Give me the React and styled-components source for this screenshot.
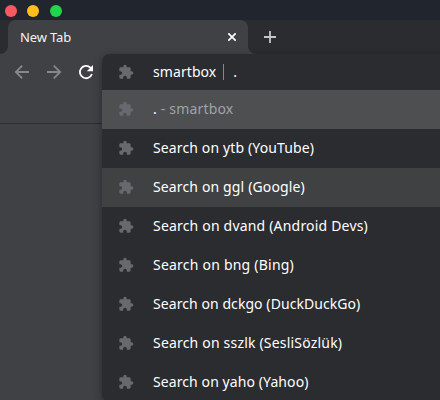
import React from "react";
import styled, { createGlobalStyle } from "styled-components";

const Global = createGlobalStyle`
  * { box-sizing: border-box; }
  html, body { margin: 0; overflow: hidden; background: #404145; }
  body { font-family: "Noto Sans", sans-serif; }
  svg { display: block; flex: none; }
`;

const Window = styled.div`
  position: relative;
  width: 440px;
  height: 400px;
  overflow: hidden;
  background: #404145;
  color: #fff;
`;

const TitleBar = styled.header`
  display: flex;
  gap: 10px;
  height: 20px;
  padding: 5px 0 0 5px;
  background: #21262e;
`;

const WindowButton = styled.span`
  width: 12px;
  height: 12px;
  margin-right: ${({ $gap }) => $gap || 0}px;
  border-radius: 50%;
  background: ${({ $color }) => $color};
`;

const TabStrip = styled.div`
  display: flex;
  height: 34px;
  background: #2b2c30;
`;

const Flare = styled.span`
  align-self: flex-end;
  width: 8px;
  height: 8px;
  background: radial-gradient(
    circle at ${({ $side }) => ($side === "left" ? "0 0" : "100% 0")},
    transparent 7.5px,
    #404145 8.3px
  );
`;

const Tab = styled.div`
  display: flex;
  align-items: center;
  justify-content: space-between;
  width: 240px;
  padding: 0 12px;
  border-radius: 8px 8px 0 0;
  background: #404145;
  font-size: 13px;
  letter-spacing: -0.15px;
  line-height: 34px;
  color: #f1f3f4;
`;

const NewTab = styled.div`
  display: flex;
  align-items: center;
  padding-left: 8px;
`;

const Toolbar = styled.nav`
  display: flex;
  gap: 16px;
  height: 70px;
  padding: 10px 0 0 14px;
  border-bottom: 1px solid #2d2e31;
`;

const Omnibox = styled.div`
  position: absolute;
  left: 102px;
  top: 54px;
  width: 360px;
  border-radius: 8px;
  overflow: hidden;
  background: #2b2c30;
  box-shadow: 0 3px 10px rgba(0, 0, 0, 0.35);
  font-size: 14px;
`;

const InputRow = styled.div`
  display: flex;
  align-items: center;
  gap: 19px;
  height: 36px;
  padding-left: 16px;
`;

const Row = styled(InputRow)`
  height: 39px;
  padding-bottom: 2px;
  background: ${({ $bg }) => $bg || "transparent"};
  letter-spacing: ${({ $tracking }) => $tracking || 0}px;
  white-space: pre;
`;

const Label = styled.span`
  line-height: 19px;
`;

const Muted = styled.span`
  color: #a0a3a7;
`;

const Keyword = styled.div`
  display: flex;
  align-items: center;
  line-height: 20px;
  letter-spacing: 0.08px;
`;

const Divider = styled.span`
  width: 1px;
  height: 16px;
  margin: 0 9px 0 7px;
  background: #85888c;
`;

const Puzzle = () => (
  <svg width="16" height="16" viewBox="0 0 24 24" fill="#66696e">
    <path d="M20.5 11H19V7c0-1.1-.9-2-2-2h-4V3.5a2.5 2.5 0 0 0-5 0V5H4c-1.1 0-1.99.9-1.99 2v3.8H3.5c1.49 0 2.7 1.21 2.7 2.7s-1.21 2.7-2.7 2.7H2V20c0 1.1.9 2 2 2h3.8v-1.5c0-1.49 1.21-2.7 2.7-2.7s2.7 1.21 2.7 2.7V22H17c1.1 0 2-.9 2-2v-4h1.5a2.5 2.5 0 0 0 0-5z" />
  </svg>
);

const engines = [
  { text: "Search on ytb (YouTube)", tracking: 0.13 },
  { text: "Search on ggl (Google)", tracking: 0.14, bg: "#404143" },
  { text: "Search on dvand (Android Devs)", tracking: 0.19 },
  { text: "Search on bng (Bing)", tracking: 0.22 },
  { text: "Search on dckgo (DuckDuckGo)", tracking: 0.07 },
  { text: "Search on sszlk (SesliSözlük)", tracking: 0.19 },
  { text: "Search on yaho (Yahoo)", tracking: 0.09 },
];

export default function App() {
  return (
    <Window>
      <Global />
      <TitleBar>
        <WindowButton $color="#f9595f" />
        <WindowButton $color="#fdbf18" $gap={1} />
        <WindowButton $color="#20d64a" />
      </TitleBar>
      <TabStrip>
        <Flare $side="left" />
        <Tab>
          <span>New Tab</span>
          <svg width="8" height="8" viewBox="0 0 8 8" stroke="#fff" strokeWidth="1.7">
            <path d="M.3.3l7.4 7.4M7.7.3L.3 7.7" />
          </svg>
        </Tab>
        <Flare $side="right" />
        <NewTab>
          <svg width="12" height="12" viewBox="0 0 12 12" stroke="#c4c6c9" strokeWidth="1.8">
            <path d="M6 0v12M0 6h12" />
          </svg>
        </NewTab>
      </TabStrip>
      <Toolbar>
        <svg width="16" height="16" viewBox="0 0 16 16" fill="none" stroke="#85878a" strokeWidth="1.8">
          <path d="M15 8H2.5M8.2 1.6L1.8 8l6.4 6.4" />
        </svg>
        <svg width="16" height="16" viewBox="0 0 16 16" fill="none" stroke="#85878a" strokeWidth="1.8">
          <path d="M1 8h12.5M7.8 1.6L14.2 8l-6.4 6.4" />
        </svg>
        <svg width="16" height="16" viewBox="0 0 16 16" fill="none">
          <path d="M13.9 10A6.15 6.15 0 1 1 12.4 3.7L13 4.4" stroke="#fff" strokeWidth="1.8" />
          <path d="M15 1v6.2H8.8z" fill="#fff" />
        </svg>
      </Toolbar>
      <Omnibox>
        <InputRow>
          <Puzzle />
          <Keyword>
            <span>smartbox</span>
            <Divider />
            <span>.</span>
          </Keyword>
        </InputRow>
        <Row $bg="#4e4f51" $tracking={0.18}>
          <Puzzle />
          <Label>
            .<Muted> - smartbox</Muted>
          </Label>
        </Row>
        {engines.map(({ text, bg, tracking }) => (
          <Row key={text} $bg={bg} $tracking={tracking}>
            <Puzzle />
            <Label>{text}</Label>
          </Row>
        ))}
      </Omnibox>
    </Window>
  );
}
